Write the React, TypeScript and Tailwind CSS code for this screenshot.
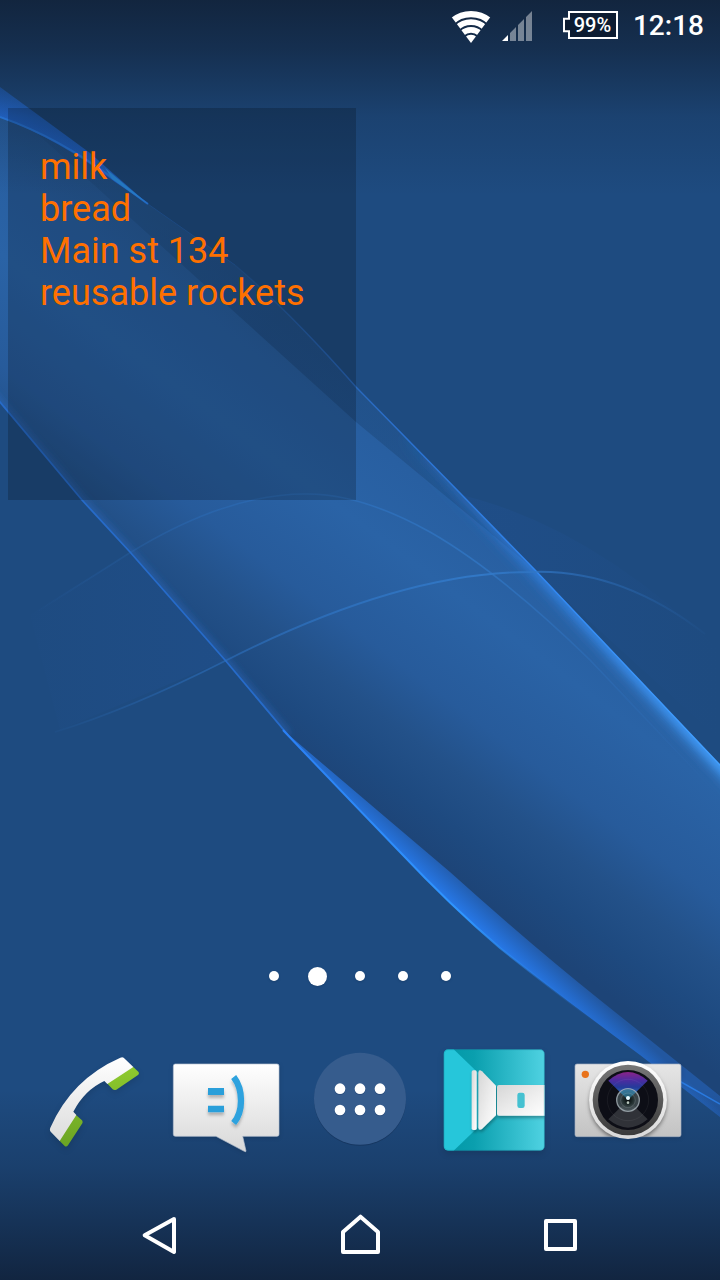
import type { ReactNode } from "react";

const notes = ["milk", "bread", "Main st 134", "reusable rockets"];
const pages = [1, 2, 3, 4, 5];
const currentPage = 2;

function Wallpaper() {
  const band =
    "M0 117 Q60 138 115 180 L148 204 L235 265 Q290 312 356 387 L460 493 L535 570 L720 765 V1100 L600 1006 L450 878 L285 733 L225 660 L130 552 L82 500 L0 402 Z";
  const topEdge = "M235 265 Q290 312 356 387 L460 493 L535 570 L720 765 L760 807";
  const lowerEdge = "M-20 378 L0 402 L82 500 L130 552 L225 660 L288 735";
  const ribbon =
    "M283 730 Q340 790 400 852 Q450 905 500 948 Q560 996 640 1055 L720 1117 V1096 Q650 1040 600 1000 Q530 944 450 872 Q365 800 283 730 Z";
  return (
    <svg
      className="absolute inset-0 -z-10 h-full w-full"
      viewBox="0 0 720 1280"
      preserveAspectRatio="xMidYMid slice"
      aria-hidden="true"
    >
      <defs>
        <linearGradient id="band" gradientUnits="userSpaceOnUse" x1="0" y1="540" x2="211" y2="258">
          <stop offset="0" stopColor="#1d4477" />
          <stop offset="0.12" stopColor="#1e4a80" />
          <stop offset="0.25" stopColor="#235189" />
          <stop offset="0.4" stopColor="#275b9b" />
          <stop offset="0.65" stopColor="#2a63a6" />
          <stop offset="0.85" stopColor="#285fa1" />
          <stop offset="1" stopColor="#275b98" />
        </linearGradient>
        <linearGradient id="ribbon" gradientUnits="userSpaceOnUse" x1="450" y1="906" x2="472" y2="882">
          <stop offset="0" stopColor="#277bee" />
          <stop offset="0.5" stopColor="#2469c8" />
          <stop offset="1" stopColor="#2257a0" />
        </linearGradient>
        <linearGradient id="ribbonEdge" gradientUnits="userSpaceOnUse" x1="285" y1="735" x2="600" y2="1025">
          <stop offset="0" stopColor="#2b80f5" />
          <stop offset="0.6" stopColor="#2f96ff" />
          <stop offset="1" stopColor="#256fd4" stopOpacity="0" />
        </linearGradient>
        <linearGradient id="corner" gradientUnits="userSpaceOnUse" x1="60" y1="110" x2="40" y2="145">
          <stop offset="0" stopColor="#2160b4" />
          <stop offset="1" stopColor="#2570e4" />
        </linearGradient>
        <linearGradient id="inner" gradientUnits="userSpaceOnUse" x1="20" y1="118" x2="560" y2="600">
          <stop offset="0" stopColor="#1e4b80" stopOpacity="0.2" />
          <stop offset="0.45" stopColor="#1e4b80" stopOpacity="0.65" />
          <stop offset="1" stopColor="#1e4b80" stopOpacity="0.5" />
        </linearGradient>
        <linearGradient id="topGlow" gradientUnits="userSpaceOnUse" x1="235" y1="265" x2="720" y2="765">
          <stop offset="0" stopColor="#2a6ac4" stopOpacity="0.15" />
          <stop offset="0.35" stopColor="#2b71cf" />
          <stop offset="0.65" stopColor="#3288f2" />
          <stop offset="1" stopColor="#43a0ff" />
        </linearGradient>
        <linearGradient id="softGlow" gradientUnits="userSpaceOnUse" x1="400" y1="430" x2="720" y2="765">
          <stop offset="0" stopColor="#3288f2" stopOpacity="0" />
          <stop offset="0.4" stopColor="#3288f2" stopOpacity="0.4" />
          <stop offset="1" stopColor="#43a0ff" stopOpacity="0.7" />
        </linearGradient>
        <linearGradient id="waveA" gradientUnits="userSpaceOnUse" x1="30" y1="0" x2="720" y2="0">
          <stop offset="0" stopColor="#2c6fbd" stopOpacity="0" />
          <stop offset="0.25" stopColor="#2c6fbd" stopOpacity="0.55" />
          <stop offset="0.65" stopColor="#3279c8" stopOpacity="0.95" />
          <stop offset="1" stopColor="#2c6fbd" stopOpacity="0" />
        </linearGradient>
        <linearGradient id="waveFill" gradientUnits="userSpaceOnUse" x1="0" y1="0" x2="720" y2="0">
          <stop offset="0" stopColor="#2456a0" stopOpacity="0" />
          <stop offset="0.3" stopColor="#2456a0" stopOpacity="0.2" />
          <stop offset="0.7" stopColor="#2456a0" stopOpacity="0.2" />
          <stop offset="1" stopColor="#2456a0" stopOpacity="0" />
        </linearGradient>
        <linearGradient id="topShade" x1="0" y1="0" x2="0" y2="1">
          <stop offset="0" stopColor="#112239" stopOpacity="0.92" />
          <stop offset="0.25" stopColor="#112239" stopOpacity="0.68" />
          <stop offset="0.6" stopColor="#112239" stopOpacity="0.22" />
          <stop offset="1" stopColor="#112239" stopOpacity="0" />
        </linearGradient>
        <linearGradient id="bottomShade" x1="0" y1="0" x2="0" y2="1">
          <stop offset="0" stopColor="#11233d" stopOpacity="0" />
          <stop offset="0.4" stopColor="#11233d" stopOpacity="0.28" />
          <stop offset="1" stopColor="#11233d" stopOpacity="0.95" />
        </linearGradient>
        <filter id="blur3"><feGaussianBlur stdDeviation="3" /></filter>
        <filter id="blur6"><feGaussianBlur stdDeviation="6" /></filter>
        <clipPath id="bandClip"><path d={band} /></clipPath>
      </defs>
      <rect width="720" height="1280" fill="#1e4b80" />
      <path d="M30 615 Q190 510 270 498 Q380 470 480 500 Q600 535 720 650 V740 L535 572 Q430 570 250 650 L60 730 Z" fill="url(#waveFill)" />
      <path d={band} fill="url(#band)" />
      <g clipPath="url(#bandClip)">
        <path d="M20 118 L356 422 L535 570 L575 605 L535 560 L356 377 L235 255 Z" fill="url(#inner)" />
        <path d={topEdge} fill="none" stroke="url(#softGlow)" strokeWidth="16" filter="url(#blur6)" />
        <path d={topEdge} fill="none" stroke="url(#softGlow)" strokeWidth="7" filter="url(#blur3)" />
        <path d={lowerEdge} fill="none" stroke="#2a6bc4" strokeOpacity="0.45" strokeWidth="8" filter="url(#blur3)" />
      </g>
      <path d={topEdge} fill="none" stroke="url(#topGlow)" strokeWidth="1.5" />
      <path d={lowerEdge} fill="none" stroke="#276bc9" strokeWidth="1.8" />
      <path d="M38 611 L128 554 Q225 494 305 494 Q360 493 430 532 Q500 572 590 660 L720 797" fill="none" stroke="url(#waveA)" strokeOpacity="0.75" strokeWidth="1.6" />
      <path d="M55 732 Q130 709 225 661 Q400 572 530 572 Q620 568 705 634" fill="none" stroke="url(#waveA)" strokeWidth="1.8" />
      <path d={ribbon} fill="url(#ribbon)" />
      <path d="M283 730 Q340 790 400 852 Q450 905 500 948 Q560 996 640 1055" fill="none" stroke="url(#ribbonEdge)" strokeWidth="2" />
      <path d="M660 1070 L720 1104" stroke="#2a7be2" strokeWidth="1.5" />
      <path d="M0 87 L90 153 L148 204 L115 182 Q60 140 0 117 Z" fill="url(#corner)" />
      <path d="M0 117 Q60 138 115 180 L148 204" fill="none" stroke="#2c84f5" strokeWidth="2" />
      <path d="M105 168 L148 204 L112 179 Z" fill="#2f9af5" />
      <path d="M148 204 L235 265" stroke="#2566bb" strokeOpacity="0.45" />
      <rect width="720" height="195" fill="url(#topShade)" />
      <rect y="1090" width="720" height="190" fill="url(#bottomShade)" />
    </svg>
  );
}

function StatusBar() {
  return (
    <header className="flex h-[52px] items-center justify-end pr-4 text-white">
      <svg className="h-[52px] w-10" viewBox="33 0 120 156" role="img" aria-label="Wi-Fi">
        <clipPath id="fan"><path d="M93 129 L20 31.7 V0 H166 V31.7 Z" /></clipPath>
        <g clipPath="url(#fan)" fill="none" stroke="#fff">
          <circle cx="93" cy="128" r="85.5" strokeWidth="19" />
          <circle cx="93" cy="128" r="61.5" strokeWidth="17" />
          <circle cx="93" cy="128" r="38.5" strokeWidth="17" />
          <circle cx="93" cy="128" r="12" strokeWidth="24" />
        </g>
      </svg>
      <svg className="ml-[11px] h-[52px] w-[30px]" viewBox="186 0 90 156" role="img" aria-label="Mobile signal">
        <path d="M204 105 V123 H186 Z" fill="#fff" />
        <path d="M210 99 L228 81 V123 H210 Z M234 75 L252 57 V123 H234 Z M258 51 L276 33 V123 H258 Z" fill="#fff" fillOpacity="0.42" />
      </svg>
      <div className="relative ml-[31px] flex h-[52px] w-[55px] items-center justify-center pl-1">
        <svg className="absolute inset-0 h-full w-full" viewBox="369 0 165 156" aria-hidden="true">
          <path d="M387 36 H531 V114 H387 V94 H372 V56 H387 Z" fill="#0d1c31" stroke="#fff" strokeWidth="6" />
        </svg>
        <span className="relative pb-[2px] text-[20px] leading-6 font-medium">99%</span>
      </div>
      <time className="ml-[15px] text-[28px] leading-8 font-medium">12:18</time>
    </header>
  );
}

function PhoneIcon() {
  return (
    <svg className="h-[120px] w-[120px] drop-shadow-md" viewBox="6 0 360 360" aria-hidden="true">
      <defs>
        <linearGradient id="phWhite" x1="0" y1="0" x2="0" y2="1">
          <stop offset="0" stopColor="#fff" /><stop offset="1" stopColor="#dcdcdc" />
        </linearGradient>
        <linearGradient id="phGreen" gradientUnits="userSpaceOnUse" x1="0" y1="80" x2="0" y2="320">
          <stop offset="0" stopColor="#8fca2e" /><stop offset="1" stopColor="#6ba424" />
        </linearGradient>
      </defs>
      <path d="M309 80 L325 95 Q329 101 324 105 L259 149 Q253 152 248 148 L231 130 Z M137 224 L156 241 Q159 245 157 250 L114 316 Q109 322 104 318 L87 301 Z" fill="url(#phGreen)" />
      <path d="M271 53 Q277 50 281 53 L310 81 L232 132 L223 123 Q164 150 130 215 L139 225 L89 303 L62 275 Q58 271 61 263 Q125 117 271 53 Z" fill="url(#phWhite)" />
    </svg>
  );
}

function MessageIcon() {
  return (
    <svg className="h-[120px] w-[120px] drop-shadow-sm" viewBox="408 0 360 360" aria-hidden="true">
      <defs>
        <linearGradient id="msg" x1="0" y1="0" x2="0" y2="1">
          <stop offset="0" stopColor="#fff" /><stop offset="1" stopColor="#d8d8d8" />
        </linearGradient>
        <filter id="smileShadow" x="-30%" y="-30%" width="160%" height="180%">
          <feDropShadow dx="0" dy="9" stdDeviation="5" floodOpacity="0.25" />
        </filter>
      </defs>
      <path d="M436 72 H741 Q747 72 747 78 V283 Q747 289 741 289 H638 L648 333 Q648 337 643 334 L558 289 H436 Q430 289 430 283 V78 Q430 72 436 72 Z" fill="url(#msg)" stroke="#b9c4d3" strokeWidth="2" />
      <g filter="url(#smileShadow)">
        <path d="M534 144 H582 V165 H534 Z M534 197 H582 V217 H534 Z" fill="#2c9fda" />
        <path d="M611 111 Q633 139 633 182 Q633 223 611 249" fill="none" stroke="#2da2de" strokeWidth="19" />
      </g>
    </svg>
  );
}

function AppsIcon() {
  return (
    <svg className="h-[120px] w-[120px]" viewBox="0 0 360 360" aria-hidden="true">
      <circle cx="180" cy="179" r="138" fill="#0d2343" fillOpacity="0.35" />
      <circle cx="180" cy="176" r="138" fill="#365c8d" />
      {[146, 210].map((y) =>
        [120, 180, 240].map((x) => (
          <g key={x + "-" + y}>
            <circle cx={x} cy={y + 3} r="16" fill="#1e3c68" fillOpacity="0.45" />
            <circle cx={x} cy={y} r="16" fill="#fff" />
          </g>
        )),
      )}
    </svg>
  );
}

function FlashlightIcon() {
  return (
    <svg className="h-[120px] w-[120px] drop-shadow-md" viewBox="402 0 360 360" aria-hidden="true">
      <defs>
        <linearGradient id="teal" x1="0" y1="0" x2="1" y2="0">
          <stop offset="0" stopColor="#0097a7" /><stop offset="0.3" stopColor="#0a9fae" /><stop offset="1" stopColor="#4fd2e2" />
        </linearGradient>
        <linearGradient id="steel" x1="0" y1="0" x2="1" y2="1">
          <stop offset="0" stopColor="#d6d6d6" /><stop offset="0.6" stopColor="#f0f0f0" /><stop offset="1" stopColor="#fff" />
        </linearGradient>
        <clipPath id="tile"><rect x="431" y="28" width="303" height="304" rx="14" /></clipPath>
        <filter id="torch"><feDropShadow dx="2" dy="7" stdDeviation="4" floodOpacity="0.3" /></filter>
      </defs>
      <g clipPath="url(#tile)">
        <rect x="431" y="28" width="303" height="304" fill="url(#teal)" />
        <path d="M431 28 H461 L534 98 V262 L461 332 H431 Z" fill="#26c6da" />
        <g fill="url(#steel)" filter="url(#torch)">
          <rect x="515" y="91" width="15" height="179" rx="5" />
          <path d="M535 98 Q536 86 546 94 L588 137 V226 L546 267 Q536 273 535 263 Z" />
          <path d="M597 135 H736 V227 H597 Q591 227 591 221 V141 Q591 135 597 135 Z" />
        </g>
        <rect x="652" y="158" width="22" height="46" rx="7" fill="#45c1d1" />
      </g>
      <rect x="432" y="29" width="301" height="302" rx="13" fill="none" stroke="#1890a6" strokeOpacity="0.65" strokeWidth="2" />
    </svg>
  );
}

function CameraIcon() {
  return (
    <svg className="h-[120px] w-[120px] drop-shadow-sm" viewBox="24 0 360 360" aria-hidden="true">
      <defs>
        <linearGradient id="body" x1="0" y1="0" x2="0" y2="1">
          <stop offset="0" stopColor="#e6e6e6" /><stop offset="1" stopColor="#c3c3c3" />
        </linearGradient>
        <linearGradient id="ring" x1="0" y1="0" x2="0" y2="1">
          <stop offset="0" stopColor="#777" /><stop offset="1" stopColor="#3a3a3a" />
        </linearGradient>
        <linearGradient id="rim" x1="0" y1="0" x2="0" y2="1">
          <stop offset="0" stopColor="#fff" /><stop offset="1" stopColor="#d8d8d8" />
        </linearGradient>
        <linearGradient id="glass" gradientUnits="userSpaceOnUse" x1="0" y1="95" x2="0" y2="180">
          <stop offset="0" stopColor="#8c2387" /><stop offset="0.3" stopColor="#4d2ca0" /><stop offset="0.55" stopColor="#243a9b" /><stop offset="1" stopColor="#2e9dc0" />
        </linearGradient>
        <radialGradient id="pupil">
          <stop offset="0" stopColor="#060a0c" /><stop offset="0.4" stopColor="#1e2b2b" /><stop offset="1" stopColor="#66777c" stopOpacity="0.5" />
        </radialGradient>
        <filter id="lensShadow"><feDropShadow dx="0" dy="8" stdDeviation="7" floodOpacity="0.5" /></filter>
        <clipPath id="bodyClip"><rect x="45" y="72" width="318" height="218" rx="6" /></clipPath>
      </defs>
      <rect x="45" y="72" width="318" height="218" rx="6" fill="url(#body)" stroke="#a4b0c2" strokeWidth="2" />
      <g clipPath="url(#bodyClip)"><circle cx="204" cy="180" r="115" filter="url(#lensShadow)" /></g>
      <circle cx="76" cy="103" r="11" fill="#e8731b" />
      <circle cx="204" cy="180" r="117" fill="url(#rim)" />
      <circle cx="204" cy="180" r="106" fill="url(#ring)" />
      <circle cx="204" cy="180" r="90" fill="#0d0e16" />
      <path d="M204 180 L145 122 Q204 70 263 122 Z" fill="url(#glass)" />
      <path d="M204 180 L145 238 Q204 288 263 238 Z" fill="#303238" />
      <circle cx="204" cy="180" r="62" fill="none" stroke="#fff" strokeOpacity="0.05" strokeWidth="3" />
      <circle cx="204" cy="180" r="34" fill="url(#pupil)" stroke="#b7c3c9" strokeOpacity="0.7" strokeWidth="4" />
      <path d="M204 180 L181 157 Q204 138 227 157 Z" fill="#2e83a7" fillOpacity="0.65" />
      <circle cx="204" cy="181" r="22" fill="none" stroke="#b7c3c9" strokeOpacity="0.2" strokeWidth="3" />
      <circle cx="204" cy="174" r="6" fill="#e6fbff" />
      <circle cx="204" cy="188" r="4" fill="#b9c7bd" />
    </svg>
  );
}

const apps: { label: string; icon: ReactNode }[] = [
  { label: "Phone", icon: <PhoneIcon /> },
  { label: "Messaging", icon: <MessageIcon /> },
  { label: "All apps", icon: <AppsIcon /> },
  { label: "Flashlight", icon: <FlashlightIcon /> },
  { label: "Camera", icon: <CameraIcon /> },
];

const navigation = [
  { label: "Back", box: "15 0 210 210", d: "M162 57 L74 106 L162 156 Z" },
  { label: "Home", box: "615 0 210 210", d: "M669 156 V96 L721.5 50 L774 96 V156 Z" },
  { label: "Recent apps", box: "1215 0 210 210", d: "M1278 63 H1365 V147 H1278 Z" },
];

export default function App() {
  return (
    <div className="relative isolate flex min-h-screen flex-col overflow-hidden font-['Roboto',sans-serif]">
      <Wallpaper />
      <StatusBar />
      <main className="flex flex-1 flex-col pt-14">
        <ul className="ml-2 min-h-[392px] w-[calc(50%-12px)] bg-black/20 px-8 pt-[38px] text-[36px] leading-[42px] whitespace-nowrap text-[#ff7000]">
          {notes.map((note) => (
            <li key={note}>{note}</li>
          ))}
        </ul>
        <nav className="mt-auto flex h-10 justify-center" aria-label="Home screen pages">
          {pages.map((page) => (
            <button
              key={page}
              type="button"
              aria-label={"Page " + page}
              className="flex w-[43px] items-center justify-center"
            >
              <span
                className={
                  page === currentPage
                    ? "h-[19px] w-[19px] rounded-full bg-white shadow-sm"
                    : "h-[10px] w-[10px] rounded-full bg-white shadow-sm"
                }
              />
            </button>
          ))}
        </nav>
      </main>
      <div className="mt-11 grid grid-cols-5 px-[25px]">
        {apps.map((app) => (
          <button key={app.label} type="button" aria-label={app.label} className="flex justify-center">
            {app.icon}
          </button>
        ))}
      </div>
      <nav className="mt-10 grid h-20 grid-cols-3 px-[60px]" aria-label="System">
        {navigation.map((item) => (
          <button key={item.label} type="button" aria-label={item.label} className="flex justify-center">
            <svg className="h-[70px] w-[70px]" viewBox={item.box} aria-hidden="true">
              <path d={item.d} fill="none" stroke="#fff" strokeWidth="12" strokeLinejoin="round" />
            </svg>
          </button>
        ))}
      </nav>
    </div>
  );
}
